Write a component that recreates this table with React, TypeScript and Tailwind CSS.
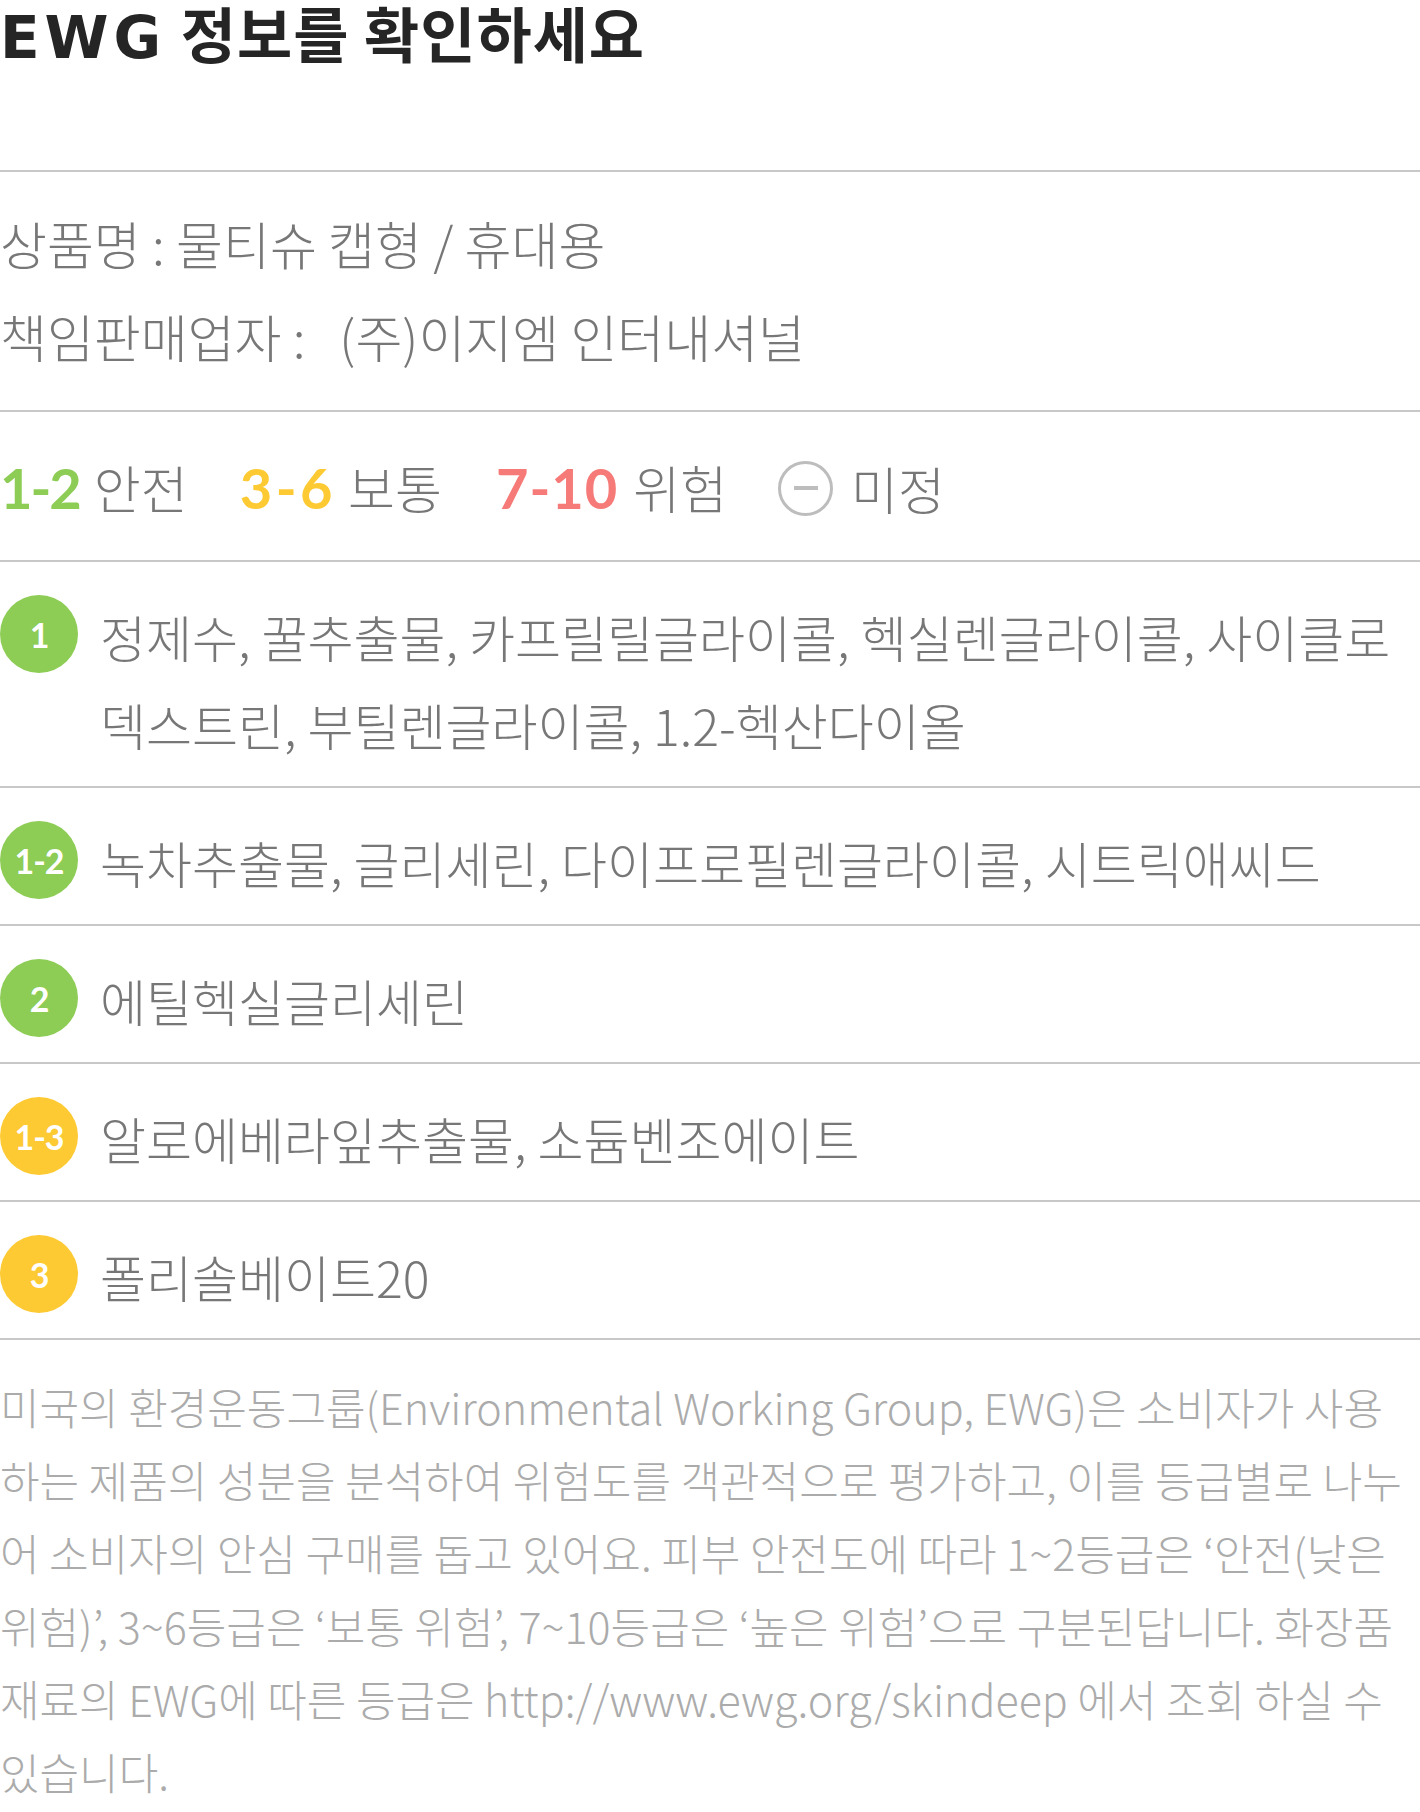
const green = "bg-[#8dcc55]";
const yellow = "bg-[#fdca34]";

type Row = {
  grade: string;
  badge: string;
  lines: string[];
};

const rows: Row[] = [
  {
    grade: "1",
    badge: green,
    lines: [
      "정제수, 꿀추출물, 카프릴릴글라이콜, 헥실렌글라이콜, 사이클로",
      "덱스트린, 부틸렌글라이콜, 1.2-헥산다이올",
    ],
  },
  {
    grade: "1-2",
    badge: green,
    lines: ["녹차추출물, 글리세린, 다이프로필렌글라이콜, 시트릭애씨드"],
  },
  { grade: "2", badge: green, lines: ["에틸헥실글리세린"] },
  { grade: "1-3", badge: yellow, lines: ["알로에베라잎추출물, 소듐벤조에이트"] },
  { grade: "3", badge: yellow, lines: ["폴리솔베이트20"] },
];

const description = [
  "미국의 환경운동그룹(Environmental Working Group, EWG)은 소비자가 사용",
  "하는 제품의 성분을 분석하여 위험도를 객관적으로 평가하고, 이를 등급별로 나누",
  "어 소비자의 안심 구매를 돕고 있어요. 피부 안전도에 따라 1~2등급은 ‘안전(낮은",
  "위험)’, 3~6등급은 ‘보통 위험’, 7~10등급은 ‘높은 위험’으로 구분된답니다. 화장품",
  "재료의 EWG에 따른 등급은 http://www.ewg.org/skindeep 에서 조회 하실 수",
  "있습니다.",
];

const Badge = ({ grade, badge }: { grade: string; badge: string }) => (
  <div
    className={`${badge} w-[78px] h-[78px] mt-[3px] shrink-0 rounded-full flex items-center justify-center text-white font-['Lato',sans-serif] font-bold text-[34px] tracking-[-1px]`}
  >
    {grade}
  </div>
);

export default function App() {
  return (
    <div className="w-[1420px] bg-white font-['Noto_Sans_CJK_KR',sans-serif] text-[#777]">
      {/* title */}
      <div className="h-[172px] border-b-2 border-[#c8c8c8]">
        <h1 className="text-[60px] leading-[64px] font-bold text-[#252525] tracking-[1px]">
          <span className="font-['DejaVu_Sans',sans-serif] text-[58px] tracking-[5px]">
            EWG
          </span>{" "}
          정보를 확인하세요
        </h1>
      </div>

      {/* product info */}
      <div className="border-b-2 border-[#c8c8c8] pt-[25px] pb-[27px] text-[51px] leading-[93px] font-light">
        <p>상품명 : 물티슈 캡형 / 휴대용</p>
        <p>책임판매업자 :&nbsp;&nbsp; (주)이지엠 인터내셔널</p>
      </div>

      {/* legend */}
      <div className="h-[150px] border-b-2 border-[#c8c8c8] flex items-center pt-[4px]">
        <div className="flex items-baseline">
          <span className="font-['Lato',sans-serif] font-bold text-[56px] text-[#8dcc55] tracking-[-2px]">
            1-2
          </span>
          <span className="ml-[14px] text-[51px] font-light">안전</span>
          <span className="ml-[52px] font-['Lato',sans-serif] font-bold text-[56px] text-[#fdca34] tracking-[3.5px]">
            3-6
          </span>
          <span className="ml-[12px] text-[51px] font-light">보통</span>
          <span className="ml-[54px] font-['Lato',sans-serif] font-bold text-[56px] text-[#f57a78] tracking-[1px]">
            7-10
          </span>
          <span className="ml-[15px] text-[51px] font-light">위험</span>
        </div>
        <div className="ml-[51px] w-[55px] h-[55px] rounded-full border-[3px] border-[#bdbdbd] flex items-center justify-center">
          <div className="w-[24px] h-[4px] bg-[#bdbdbd]" />
        </div>
        <span className="ml-[18px] text-[51px] font-light">미정</span>
      </div>

      {/* ingredients */}
      {rows.map((row) => (
        <div
          key={row.grade}
          className="flex items-start gap-[22px] border-b-2 border-[#c8c8c8] pt-[30px] pb-[18px]"
        >
          <Badge grade={row.grade} badge={row.badge} />
          <p className="text-[50px] leading-[88px] font-light">
            {row.lines.map((line, i) => (
              <span key={i} className="block whitespace-nowrap">
                {line}
              </span>
            ))}
          </p>
        </div>
      ))}

      {/* description */}
      <div className="pt-[30px] text-[43px] leading-[73px] font-light text-[#ababab]">
        {description.map((line, i) => (
          <p key={i} className="whitespace-nowrap">
            {line}
          </p>
        ))}
      </div>
    </div>
  );
}
